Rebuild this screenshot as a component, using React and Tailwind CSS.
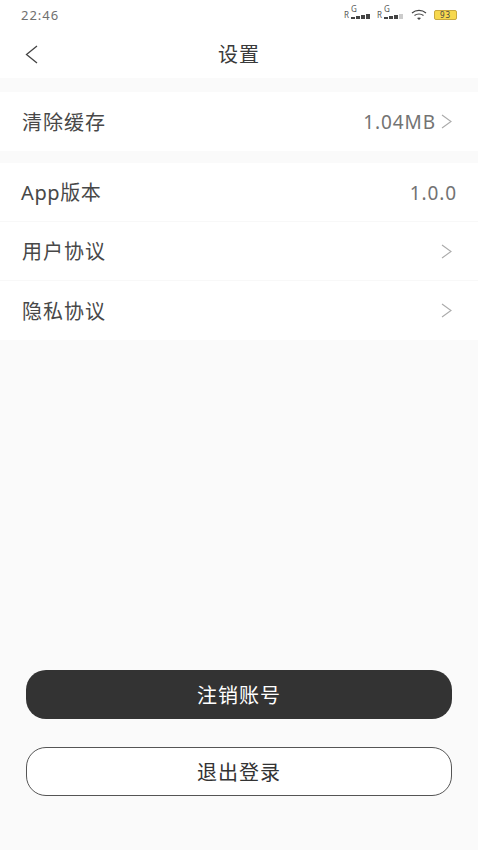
const font = { fontFamily: '"Noto Sans", "Noto Sans CJK SC", sans-serif' };

const Chevron = () => (
    <svg width="11" height="15" viewBox="0 0 11 15" fill="none">
        <path d="M1 1 L10 7.5 L1 14" stroke="#ababab" strokeWidth="1.1" />
    </svg>
);

const Signal = ({ dim }) => (
    <div className="flex w-[28px] items-end gap-[2px]">
        <span className="text-[8px] leading-[8px] text-[#555]">R</span>
        <div className="relative flex items-end gap-px">
            <span className="absolute -top-[9px] left-0 text-[8px] leading-[8px] text-[#555]">G</span>
            <span className="h-[2px] w-[4px] bg-[#444]" />
            <span className="h-[3px] w-[4px] bg-[#444]" />
            <span className="h-[4px] w-[4px] bg-[#444]" />
            <span className={`h-[5px] w-[4px] ${dim ? 'bg-[#ccc]' : 'bg-[#444]'}`} />
        </div>
    </div>
);

const Row = ({ label, value, arrow, border, labelClass = 'pl-0 tracking-[1px]' }) => (
    <div className={`flex h-[59px] items-center justify-between bg-white pl-[22px] ${arrow ? 'pr-[26px]' : 'pr-[21px]'} ${border ? 'border-b border-[#f8f8f8]' : ''}`}>
        <span className={`pt-[2px] text-[20px] text-[#484848] ${labelClass}`}>{label}</span>
        <div className="flex items-center gap-[5px]">
            {value && <span className="pt-[2px] text-[19px] tracking-[0.9px] text-[#737373]">{value}</span>}
            {arrow && <Chevron />}
        </div>
    </div>
);

export default function App() {
    return (
        <div style={font} className="flex h-[850px] w-[478px] flex-col bg-[#fafafa]">
            {/* Status bar */}
            <div className="flex h-[30px] items-center justify-between bg-white pl-[21px] pr-[21px]">
                <span className="pt-[1px] text-[13px] tracking-[1px] text-[#707070]">22:46</span>
                <div className="flex items-center">
                    <Signal />
                    <div className="w-[5px]" />
                    <Signal dim />
                    <svg width="16" height="12" viewBox="0 0 16 12" fill="none" className="ml-[6px]">
                        <path d="M1 4 C5 0.5 11 0.5 15 4" stroke="#444" strokeWidth="1.2" />
                        <path d="M3.5 6.5 C6 4.5 10 4.5 12.5 6.5" stroke="#444" strokeWidth="1.2" />
                        <path d="M6 9 C7 8.2 9 8.2 10 9 L8 11 Z" fill="#444" />
                    </svg>
                    <div className="ml-[7px] flex h-[10px] w-[23px] items-center justify-center rounded-[2px] border border-[#c9a93f] bg-[#f7d84e] text-[8px] leading-none tracking-[1px] text-[#444]">
                        93
                    </div>
                </div>
            </div>

            {/* Header */}
            <div className="relative flex h-[48px] items-center justify-center bg-white">
                <svg width="13" height="19" viewBox="0 0 13 19" fill="none" className="absolute left-[25px] top-[15px]">
                    <path d="M12 1 L1.5 9.5 L12 18" stroke="#444" strokeWidth="1.3" />
                </svg>
                <span className="pt-[2px] text-[20px] tracking-[1px] text-[#3a3a3a]">设置</span>
            </div>

            <div className="mt-[14px] bg-white">
                <Row label="清除缓存" value="1.04MB" arrow />
            </div>

            <div className="mt-[12px]">
                <Row label="App版本" value="1.0.0" border labelClass="-ml-px tracking-[0.6px]" />
                <Row label="用户协议" arrow border />
                <Row label="隐私协议" arrow />
            </div>

            {/* Buttons */}
            <div className="mt-[330px] flex flex-col gap-[28px] px-[26px]">
                <button className="h-[49px] rounded-[20px] bg-[#333] pt-[2px] text-[20px] tracking-[1px] text-white">
                    注销账号
                </button>
                <button className="h-[49px] rounded-[20px] border border-[#555] bg-white pt-[2px] text-[20px] tracking-[1px] text-[#333]">
                    退出登录
                </button>
            </div>
        </div>
    );
}
